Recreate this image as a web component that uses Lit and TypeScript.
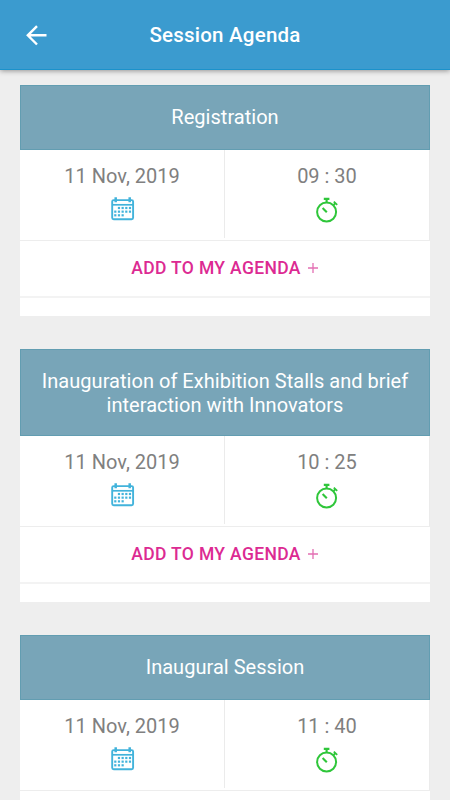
import { LitElement, html, css, svg } from "lit";
import { customElement, property } from "lit/decorators.js";

interface Session {
  title: string;
  date: string;
  time: string;
}

const sessions: Session[] = [
  { title: "Registration", date: "11 Nov, 2019", time: "09 : 30" },
  {
    title: "Inauguration of Exhibition Stalls and brief interaction with Innovators",
    date: "11 Nov, 2019",
    time: "10 : 25",
  },
  { title: "Inaugural Session", date: "11 Nov, 2019", time: "11 : 40" },
];

// Day squares inside the calendar: [first column, last column] of each row.
const dayRows: [number, number][] = [[1, 4], [0, 4], [0, 2]];

@customElement("session-card")
class SessionCard extends LitElement {
  @property({ attribute: false }) session!: Session;

  static styles = css`
    :host { display: block; flex: none; background: #fff; }
    .title {
      box-sizing: border-box;
      padding: 19px 16px 18px;
      border: 1px solid #629db1;
      background: #78a5b8;
      color: #fff;
      font-size: 20px;
      line-height: 24px;
      letter-spacing: 0.03px;
      text-align: center;
      min-height: 65px;
    }
    .meta {
      display: grid;
      grid-template-columns: 1fr 1fr;
      height: 90px;
      border-bottom: 1px solid #ededed;
    }
    .cell {
      box-sizing: border-box;
      display: flex;
      flex-direction: column;
      align-items: center;
      padding-top: 14px;
      height: 88px;
      border-right: 1px solid #ebebeb;
      color: #808080;
      font-size: 20px;
      line-height: 24px;
    }
    .cell:last-child { height: 90px; }
    svg { display: block; flex: none; }
    .cell svg { margin-top: 8px; }
    .add {
      display: flex;
      justify-content: center;
      align-items: center;
      box-sizing: border-box;
      height: 57px;
      padding-bottom: 2px;
      border-bottom: 2px solid #f3f3f3;
      color: #dc2a92;
      font-size: 17.5px;
      font-weight: 500;
      letter-spacing: 0.35px;
    }
    .add svg { margin: 1px 0 0 6px; }
    .foot { height: 18px; }
  `;

  render() {
    const s = this.session;
    return html`
      <div class="title">${s.title}</div>
      <div class="meta">
        <div class="cell">
          ${s.date}
          <svg width="26" height="26" viewBox="0 0 26 26" fill="none">
            <rect x="3.2" y="4.1" width="20.9" height="19.1" rx="1.5" stroke="#42b3db" stroke-width="1.9" />
            <path d="M3 8.8H24.5" stroke="#42b3db" stroke-width="1.7" />
            <path d="M6.7 1.2V6.2M20.7 1.2V6.2" stroke="#42b3db" stroke-width="2.5" />
            ${dayRows.map(([from, to], row) =>
              Array.from({ length: to - from + 1 }, (_, i) => svg`
                <rect x=${5.2 + (from + i) * 3.67} y=${10.9 + row * 3.65} width="2.2" height="2.2" fill="#42b3db" />`)
            )}
          </svg>
        </div>
        <div class="cell">
          ${s.time}
          <svg width="26" height="28" viewBox="0 0 26 28" fill="none" stroke="#2fc63a">
            <circle cx="12.6" cy="16" r="9.5" stroke-width="2" />
            <path d="M9.8 2.9H15.4M12.6 2.9V6.5" stroke-width="2.1" />
            <path d="M19.8 5.6L23.2 8.9M21.4 7.2L19.6 9" stroke-width="1.8" />
            <path d="M8.6 12L12.8 16.2" stroke-width="2.1" />
          </svg>
        </div>
      </div>
      <div class="add">
        <span>ADD TO MY AGENDA</span>
        <svg width="12" height="12" viewBox="0 0 12 12" fill="none" stroke="#e36fb3" stroke-width="1.3">
          <path d="M1 6H11M6 1V11" />
        </svg>
      </div>
      <div class="foot"></div>
    `;
  }
}

@customElement("app-root")
class AppRoot extends LitElement {
  static styles = css`
    :host {
      display: flex;
      flex-direction: column;
      height: 800px;
      overflow: hidden;
      background: #eee;
      font-family: Roboto, "Liberation Sans", sans-serif;
    }
    .bar {
      flex: none;
      box-sizing: border-box;
      display: grid;
      grid-template-columns: 50px 1fr 50px;
      align-items: center;
      height: 70px;
      padding: 0 11px;
      border-bottom: 1px solid #1b92cb;
      background: #3b9bcf;
      box-shadow: 0 1px 5px rgba(0, 0, 0, 0.38);
      color: #fff;
    }
    .bar svg { display: block; margin-left: 14px; }
    .heading {
      margin: 0;
      font-size: 20.5px;
      font-weight: 500;
      line-height: 24px;
      letter-spacing: 0.22px;
      text-align: center;
      padding-top: 1px;
    }
    .list {
      display: flex;
      flex-direction: column;
      gap: 33px;
      padding: 15px 20px 0;
    }
  `;

  render() {
    return html`
      <header class="bar">
        <svg width="24" height="24" viewBox="0 0 24 24" fill="none" stroke="#fff" stroke-width="2.4">
          <path d="M21.5 12.3H3M12 3.1L2.8 12.3L12 21.5" />
        </svg>
        <h1 class="heading">Session Agenda</h1>
      </header>
      <main class="list">
        ${sessions.map((s) => html`<session-card .session=${s}></session-card>`)}
      </main>
    `;
  }
}
